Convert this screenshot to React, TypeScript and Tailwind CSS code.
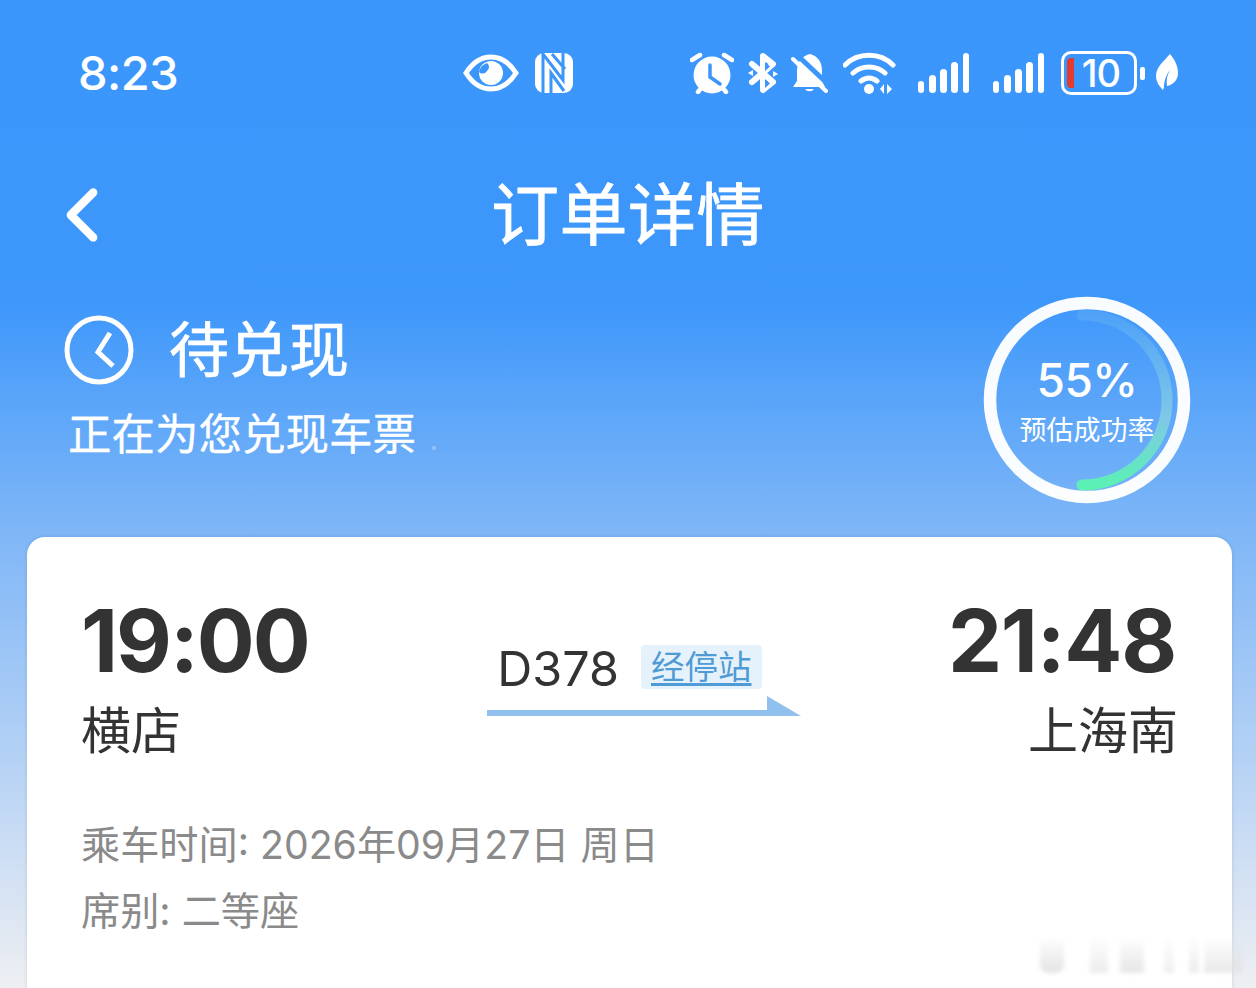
import { ChevronLeft } from 'lucide-react'

const font = 'font-["Inter","Noto_Sans_CJK_SC",sans-serif]'

function EyeIcon() {
  return (
    <svg width="56" height="38" viewBox="0 0 56 38">
      <path d="M3 19C10 8 19 3 28 3s18 5 25 16c-7 11-16 16-25 16S10 30 3 19z" fill="none" stroke="white" strokeWidth="5" />
      <circle cx="28" cy="19" r="12" fill="white" />
      <path d="M16 18a5 5 0 0 0 8-1 5 5 0 0 0 0-8 12 12 0 0 0-8 9z" fill="#3b96fb" />
    </svg>
  )
}

function NfcIcon() {
  return (
    <svg width="38" height="40" viewBox="0 0 38 40">
      <rect x="0" y="0" width="38" height="40" rx="9" fill="white" />
      <path d="M8 40V1L28 27V0" fill="none" stroke="#3b96fb" strokeWidth="3" />
      <path d="M16 40V20L29 38" fill="none" stroke="#3b96fb" strokeWidth="3" />
      <path d="M17 1L30 16" fill="none" stroke="#3b96fb" strokeWidth="3" />
    </svg>
  )
}

function AlarmIcon() {
  return (
    <svg width="44" height="42" viewBox="0 0 44 42">
      <circle cx="22" cy="23" r="18.5" fill="white" />
      <path d="M2 8l8-5M42 8l-8-5M8 40l4-5M36 40l-4-5" stroke="white" strokeWidth="4.5" strokeLinecap="round" />
      <path d="M20 13v12l10 7" fill="none" stroke="#3b96fb" strokeWidth="3.5" strokeLinecap="round" />
    </svg>
  )
}

function BluetoothIcon() {
  return (
    <svg width="30" height="40" viewBox="0 0 30 40">
      <path d="M4 11L25 29L15 37V3L25 11L4 29" fill="none" stroke="white" strokeWidth="6" strokeLinejoin="round" strokeLinecap="round" />
      <path d="M17 9v9l5-4.500zM17 26v9l5-4.500z" fill="#3b96fb" />
      <path d="M0 20l5-3v6zM30 21l-5-3v6z" fill="white" />
    </svg>
  )
}

function BellOffIcon() {
  return (
    <svg width="38" height="40" viewBox="0 0 38 40">
      <path d="M19 1C10 3 6 10 6 18V28L2 34H30L34 34 31 28V18C31 9 27 3 19 1z" fill="white" />
      <path d="M14 36a5 4 0 0 0 9 0z" fill="white" />
      <path d="M5 1L40 34" stroke="#3b96fb" strokeWidth="5" />
      <path d="M36 36L28 38 34 40z" fill="#3b96fb" />
      <path d="M30 34H38V38H33z" fill="#3b96fb" />
      <path d="M2 6L35 38" stroke="white" strokeWidth="4" strokeLinecap="round" />
    </svg>
  )
}

function WifiIcon() {
  return (
    <svg width="54" height="44" viewBox="0 0 54 44">
      <path d="M2 14C15 1 37 1 50 14M10 22c9-8 23-8 32 0M18 30c5-4 11-4 16 0" fill="none" stroke="white" strokeWidth="5" strokeLinecap="round" />
      <circle cx="26" cy="38" r="5" fill="white" />
      <path d="M41 33l-4 5 4 5zM44 33l5 5-5 5z" fill="white" />
    </svg>
  )
}

function SignalIcon() {
  return (
    <svg width="52" height="42" viewBox="0 0 52 42">
      <rect x="0" y="29" width="6" height="12" rx="3" fill="white" />
      <rect x="11" y="23" width="7" height="18" rx="3.5" fill="white" />
      <rect x="22" y="17" width="7" height="24" rx="3.5" fill="white" />
      <rect x="33" y="10" width="7" height="31" rx="3.5" fill="white" />
      <rect x="45" y="1" width="6" height="40" rx="3" fill="white" />
    </svg>
  )
}

function LeafIcon() {
  return (
    <svg width="22" height="38" viewBox="0 0 22 38">
      <path d="M14 0C19 6 22 12 22 19c0 7-5 12-11 13-1-5 0-11 3-16-3 4-6 10-6 17l-1 3C3 32 0 27 0 22 0 13 8 7 14 0z" fill="white" />
    </svg>
  )
}

function Battery() {
  return (
    <div className="flex items-center gap-[3px]">
      <div className="relative flex h-[44px] w-[76px] items-center justify-center overflow-hidden rounded-[10px] border-[3px] border-white">
        <div className="absolute top-[4px] bottom-[4px] left-[3px] w-[7px] rounded-l-[4px] bg-[#e33b2e]" />
        <span className="pl-[4px] text-[38px] leading-none font-medium tracking-[-1px] text-white">10</span>
      </div>
      <div className="h-[13px] w-[5px] rounded-[2px] bg-white" />
    </div>
  )
}

function ClockIcon() {
  return (
    <svg width="70" height="72" viewBox="0 0 70 72">
      <circle cx="35" cy="36" r="32" fill="none" stroke="white" strokeWidth="5" />
      <path d="M46 19L34 38l15 14" fill="none" stroke="white" strokeWidth="5" />
    </svg>
  )
}

function ProgressRing() {
  return (
    <div className="relative flex h-[208px] w-[208px] flex-col items-center text-white">
      <svg className="absolute inset-0" width="208" height="208" viewBox="0 0 208 208">
        <defs>
          <linearGradient id="arc" x1="0" y1="0" x2="0" y2="1">
            <stop offset="0" stopColor="#4fa2f8" />
            <stop offset="0.6" stopColor="#7fc8e8" />
            <stop offset="1" stopColor="#5cf0b4" />
          </linearGradient>
        </defs>
        <path d="M99 19A85 85 0 1 1 99 189" fill="none" stroke="url(#arc)" strokeWidth="11" strokeLinecap="round" />
        <circle cx="104" cy="104" r="97" fill="none" stroke="white" strokeWidth="12.500" opacity="0.97" />
      </svg>
      <span className="mt-[54px] text-[46px] leading-[60px] font-medium tracking-[-0.5px]">55%</span>
      <span className="mt-[3px] text-[27px] leading-[36px]">预估成功率</span>
    </div>
  )
}

function Watermark() {
  return (
    <div className="absolute top-[936px] left-[1040px] flex h-[37px] opacity-70 blur-[2px]">
      <div className="w-[24px] rounded-b-[8px] bg-gradient-to-b from-transparent to-[#d8d8d8]" />
      <div className="ml-[26px] w-[18px] bg-gradient-to-b from-transparent to-[#e4e4e4]" />
      <div className="ml-[12px] w-[24px] bg-gradient-to-b from-transparent to-[#dcdcdc]" />
      <div className="ml-[20px] w-[10px] bg-gradient-to-b from-transparent to-[#e8e8e8]" />
      <div className="ml-[15px] w-[10px] bg-gradient-to-b from-transparent to-[#e4e4e4]" />
      <div className="ml-[5px] w-[38px] bg-gradient-to-b from-transparent to-[#e0e0e0]" />
    </div>
  )
}

export default function App() {
  return (
    <div className={`${font} relative h-[988px] w-[1256px] overflow-hidden bg-[linear-gradient(to_bottom,#3b96fb_0px,#3d97fb_300px,#7cb5f7_520px,#b5d2f5_760px,#eeeff2_988px)]`}>
      <div className="flex items-center pt-[46px] pr-[78px] pl-[78px] text-white">
        <span className="w-[385px] text-[47px] leading-[54px] font-medium tracking-[-0.5px]">8:23</span>
        <div className="flex items-center gap-[16px]">
          <EyeIcon />
          <NfcIcon />
        </div>
        <div className="ml-auto flex items-center">
          <AlarmIcon />
          <div className="ml-[14px]"><BluetoothIcon /></div>
          <div className="ml-[13px]"><BellOffIcon /></div>
          <div className="ml-[14px]"><WifiIcon /></div>
          <div className="ml-[21px]"><SignalIcon /></div>
          <div className="ml-[23px]"><SignalIcon /></div>
          <div className="ml-[16px]"><Battery /></div>
          <div className="ml-[11px]"><LeafIcon /></div>
        </div>
      </div>

      <div className="relative mt-[75px] flex h-[80px] items-center justify-center">
        <ChevronLeft className="absolute top-[-5px] left-[37px] text-white" size={90} strokeWidth={2.2} />
        <h1 className="text-[68px] leading-[80px] font-normal tracking-[0.5px] text-white [-webkit-text-stroke:0.8px_white]">订单详情</h1>
      </div>

      <div className="mt-[41px] flex justify-between pr-[65px] pl-[64px]">
        <div className="text-white">
          <div className="flex items-center gap-[35px] pt-[18px]">
            <ClockIcon />
            <span className="text-[60px] leading-[70px] font-normal [-webkit-text-stroke:0.7px_white]">待兑现</span>
          </div>
          <p className="mt-[18px] ml-[4px] text-[43.5px] leading-[60px] [-webkit-text-stroke:0.3px_white]">
            正在为您兑现车票
            <span className="ml-[16px] inline-block h-[4px] w-[4px] rounded-full bg-white/30" />
          </p>
        </div>
        <ProgressRing />
      </div>

      <div className="mt-[33px] mr-[24px] ml-[27px] h-[480px] rounded-[18px] bg-white px-[54px] pt-[56px] shadow-[0_0_4px_rgba(0,0,0,0.12)]">
        <div className="flex items-start justify-between text-[#333333]">
          <div>
            <div className="text-[86px] leading-[96px] font-bold tracking-[-2px]">19:00</div>
            <div className="mt-[12px] text-[50px] leading-[60px]">横店</div>
          </div>
          <div className="mt-[49px] ml-[32px] w-[314px]">
            <div className="flex items-center">
              <span className="ml-[10px] text-[48.5px] leading-[54px]">D378</span>
              <span className="mb-[5px] ml-[22px] rounded-[4px] bg-[#e6f2fb] px-[10px] text-[33.5px] leading-[44px] text-[#4f9bd5] underline underline-offset-4">经停站</span>
            </div>
            <svg width="314" height="20" viewBox="0 0 314 20">
              <path d="M0 14H280V0L314 20H0z" fill="#8fc0ee" />
            </svg>
          </div>
          <div className="text-right">
            <div className="mr-[2px] text-[86px] leading-[96px] font-bold tracking-[-1.2px]">21:48</div>
            <div className="mt-[12px] text-[50px] leading-[60px]">上海南</div>
          </div>
        </div>
        <div className="mt-[51px] text-[39.2px] leading-[66px] text-[#8a8a8a]">
          <p>乘车时间: 2026年09月27日 周日</p>
          <p>席别: 二等座</p>
        </div>
      </div>

      {/* blurred watermark over the bottom right */}
      <Watermark />
    </div>
  )
}
